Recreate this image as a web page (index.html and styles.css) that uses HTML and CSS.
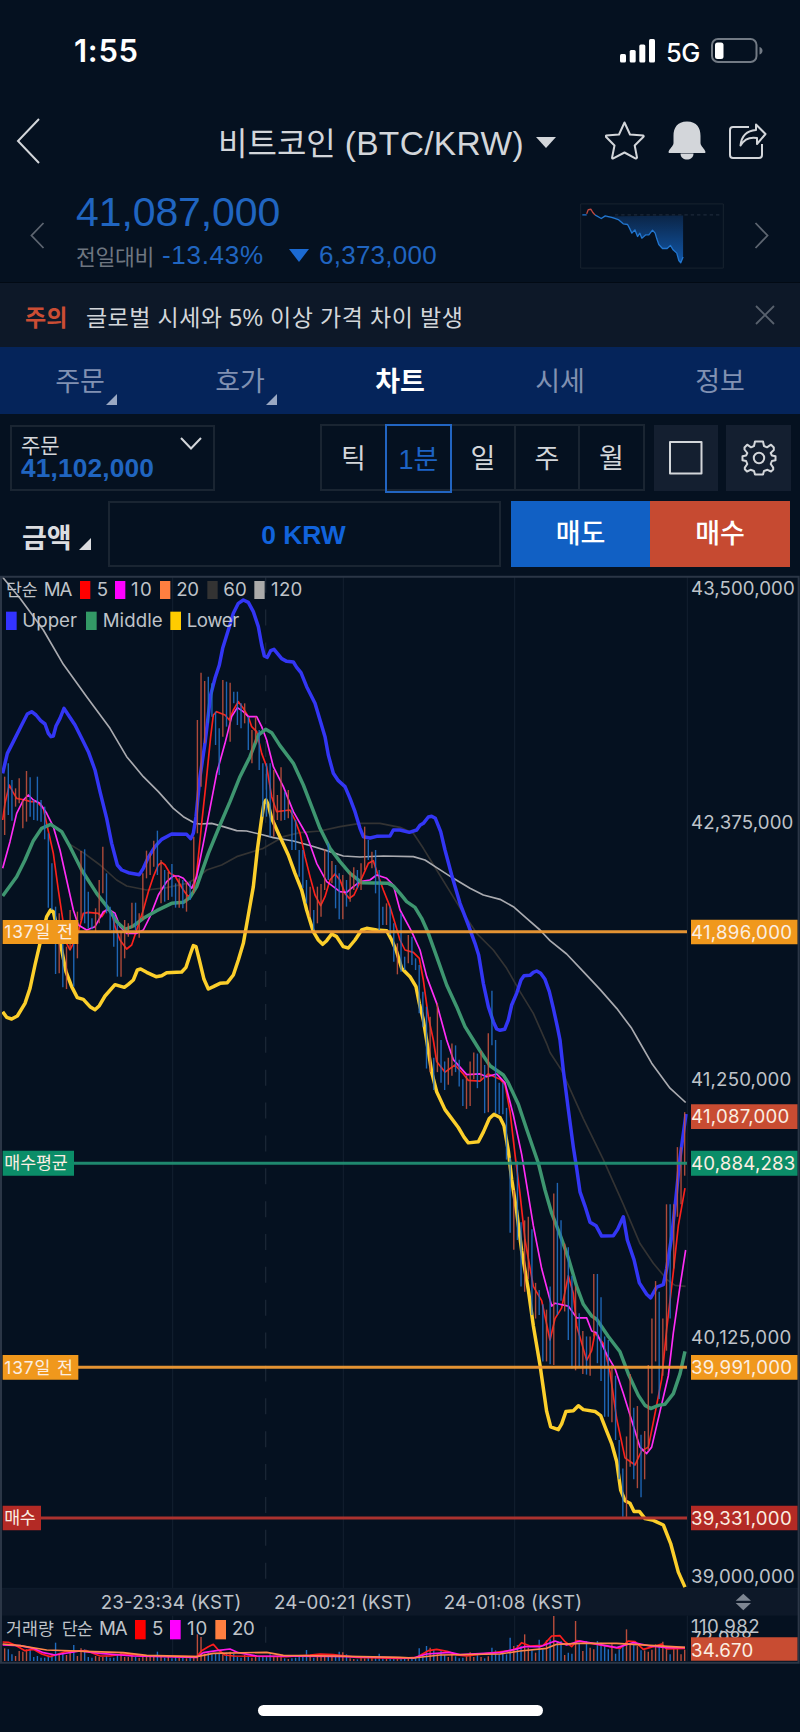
FILE: index.html
```html
<!DOCTYPE html>
<html lang="ko">
<head>
<meta charset="utf-8">
<title>비트코인 (BTC/KRW)</title>
<link rel="stylesheet" href="styles.css">
</head>
<body>
<div class="phone">
  <div class="status">
    <span class="clock">1:55</span>
    <div class="status-right">
      <svg class="signal" viewBox="0 0 35 24"><rect x="0" y="15" width="6" height="8.5" rx="1.5"/><rect x="9.7" y="11" width="6" height="12.5" rx="1.5"/><rect x="19.3" y="5.5" width="6" height="18" rx="1.5"/><rect x="29" y="0" width="6" height="23.5" rx="1.5"/></svg>
      <span class="net">5G</span>
      <svg class="battery" viewBox="0 0 52 25"><rect class="shell" x="1" y="1" width="44.5" height="23" rx="6"/><rect x="4" y="4.500" width="8.500" height="16.500" rx="2.500" fill="#fff"/><path class="nub" d="M48.500 9c4 1 4 6.500 0 7.500z"/></svg>
    </div>
  </div>

  <header class="header">
    <svg class="back" viewBox="0 0 24 46"><path d="M23 1 2 23 23 45"/></svg>
    <h1 class="title">비트코인 <span>(BTC/KRW)</span></h1>
    <svg class="caret" viewBox="0 0 20 11"><path d="M0 0h20L10 11z"/></svg>
    <svg class="icon star" viewBox="0 0 40 39"><path d="M19.500 1.500 25 13.500 38.300 14.500Q39 15 38.500 15.800L29.700 24.500 32 36.500Q31.500 38 30.300 37.400L19.500 31.500 8.300 37.400Q7 38 7.100 36.500L9.500 24.500 .9 15.800Q.5 15 1.200 14.500L14 13.500Z"/></svg>
    <svg class="icon bell" viewBox="0 0 38 39"><path d="M19 .5C9 .5 5.500 7 5.500 15v7c0 3-4.500 6-5 9 0 .8.500 1 1.500 1h34c1 0 1.500-.2 1.500-1-.5-3-5-6-5-9v-7C32.500 7 29 .5 19 .5z"/><path d="M12.500 32.500c0 8 13 8 13 0z"/></svg>
    <svg class="icon share" viewBox="0 0 38 37"><path d="M20 4H4Q1 4 1 7V32Q1 35 4 35H30Q33 35 33 32V21M27 1.500 36.500 11 28 21V15Q17 13 11.500 22.500 13 8 27 7Z"/></svg>
  </header>

  <section class="ticker">
    <svg class="arrow" viewBox="0 0 15 27"><path d="M13.500 1 1.500 13.500 13.500 26"/></svg>
    <div class="quote">
      <div class="price">41,087,000</div>
      <div class="change">
        <span class="label">전일대비</span>
        <span class="pct">-13.43%</span>
        <svg class="down" viewBox="0 0 20 13"><path d="M0 0h20L10 13z"/></svg>
        <span class="amount">6,373,000</span>
      </div>
    </div>
    <svg class="spark" viewBox="60 548 433 197">
      <defs><linearGradient id="fade" x1="0" y1="0" x2="0" y2="1"><stop offset="0" stop-color="#0b2547"/><stop offset="1" stop-color="#1157a8"/></linearGradient></defs>
      <rect class="frame" x="62" y="550" width="429" height="193"/>
      <path class="base" d="M165 583H480"/>
      <path fill="url(#fade)" d="M125 588L175 597 190 610 203 612 216 638 225 628 233 648 240 638 246 653 258 643 267 643 278 629 286 638 297 672 308 684 322 684 332 675 340 688 351 698 357 720 363 727 370 710V585Z"/>
      <path class="fall" d="M67 583H80M105 583L124 594 136 586 158 591 175 597 190 610 203 612 210 625 216 638 225 628 233 648 240 638 246 653 258 643 267 643 278 629 286 638 291 655 297 672 308 684 322 684 332 675 340 688 351 698 357 720 363 727 370 710"/>
      <path class="rise" d="M80 580 85 567 93 566 98 575 105 583"/>
    </svg>
    <svg class="arrow next" viewBox="0 0 15 27"><path d="M1.500 1 13.500 13.500 1.500 26"/></svg>
  </section>

  <section class="notice">
    <strong>주의</strong>
    <span class="message">글로벌 시세와 5% 이상 가격 차이 발생</span>
    <svg class="close" viewBox="0 0 20 20"><path d="M1 1 19 19M19 1 1 19"/></svg>
  </section>

  <nav class="tabs">
    <a class="tab more">주문</a>
    <a class="tab more">호가</a>
    <a class="tab active">차트</a>
    <a class="tab">시세</a>
    <a class="tab">정보</a>
  </nav>

  <section class="toolbar">
    <div class="order">
      <div class="order-text"><span>주문</span><b>41,102,000</b></div>
      <svg class="chev" viewBox="0 0 22 13"><path d="M1 1 11 11.500 21 1"/></svg>
    </div>
    <div class="periods">
      <span>틱</span><span class="on">1분</span><span>일</span><span>주</span><span>월</span>
    </div>
    <button class="tool"><svg viewBox="0 0 36 36"><rect x="2" y="2" width="31.500" height="31.500"/></svg></button>
    <button class="tool"><svg viewBox="0 0 36 36"><path d="M14 1.500h8l1 4.500 3 1.300 4-2.600 2.800 2.800v2.500L29.700 13l1.200 2.500 3.600.7v4l-3.600.8-1.200 3 2.500 3.600v1.900L30 31.500l-3.500-1.700L23 31l-1 3.500h-8L13 31l-3.500-1.200L6 31.500l-2.200-2.300v-1.600l2.500-3.600-1.200-3-3.600-.8v-4l3.600-.7L6.300 13 3.500 9.500V7.500L6.200 4.700l3.800 2.600L13 6z"/><circle cx="18" cy="18" r="5.200"/></svg></button>
  </section>

  <section class="trade">
    <div class="kind">금액</div>
    <div class="value">0 KRW</div>
    <button class="sell">매도</button>
    <button class="buy">매수</button>
  </section>

  <svg class="chart" viewBox="0 15 2400 3267">
    <rect class="band" x="6" y="3055" width="2388" height="82"/>
    <path class="grid" d="M518 20V3055M1030 20V3055M1544 20V3055M2062 20V3055M518 3137V3273M1030 3137V3273M1544 3137V3273M2062 3137V3273"/>
    <path class="grid day" d="M797 20V3055M797 3170V3220"/>
    <path class="sep" d="M6 3055H2394"/>

    <g id="averages" class="ma"></g>
    <g id="bands" class="bands"></g>
    <g id="candles" class="candles"></g>
    <g id="volumes" class="candles volumes"></g>

    <g class="vol-ma" transform="translate(0 3030)">
      <polyline stroke="#ff1d1d" points="8,186 25,187 45,195 75,212 100,208 125,222 150,230 175,222 195,215 260,212 300,228 330,228 370,222 440,228 590,230 605,212 625,200 640,193 655,210 675,225 700,228 860,230 930,225 960,222 1000,224 1070,232 1200,235 1250,232 1285,212 1310,208 1345,215 1370,225 1400,228 1480,218 1530,212 1550,205 1565,188 1590,198 1630,196 1655,168 1680,167 1695,185 1715,200 1730,182 1760,188 1800,195 1860,205 1885,183 1905,185 1930,208 1960,200 1985,192 2000,207 2055,205"/>
      <polyline stroke="#ff18e8" points="8,195 60,197 100,205 130,218 165,225 240,213 300,220 400,228 590,232 610,218 650,212 690,207 715,218 770,228 1000,229 1240,234 1280,222 1350,217 1380,224 1500,218 1545,208 1575,200 1620,200 1665,183 1700,195 1740,183 1780,190 1850,203 1900,188 1950,198 2000,203 2055,203"/>
      <polyline stroke="#ff8748" points="8,192 60,197 140,210 260,214 370,218 440,226 590,230 640,220 800,217 850,226 1000,228 1200,232 1240,234 1320,225 1500,222 1560,213 1640,205 1670,193 1740,190 1850,190 1950,196 2055,202"/>
    </g>

    <g class="levels">
      <path stroke="#f09a35" d="M200 1085H2061M200 2392H2061"/>
      <path stroke="#218f73" d="M200 1780H2061"/>
      <path stroke="#b43430" d="M100 2844H2061"/>
    </g>

    <path fill="#f0981c" d="M8 1050H235V1122H8zM2073 1049H2393V1123H2073zM8 2355H235V2429H8zM2073 2355H2393V2429H2073z"/>
    <path fill="#0b8d68" d="M8 1742H222V1817H8zM2073 1742H2393V1817H2073z"/>
    <path fill="#b32a25" d="M8 2807H123V2881H8zM2073 2807H2393V2881H2073z"/>
    <path fill="#c84c32" d="M2073 1603H2393V1677H2073z"/>

    <g class="label tagged">
      <text class="ko" x="13" y="1105" textLength="206">137일 전</text>
      <text class="ko" x="13" y="1798" textLength="190">매수평균</text>
      <text class="ko" x="13" y="2411" textLength="206">137일 전</text>
      <text class="ko" x="13" y="2863" textLength="94">매수</text>
      <text x="2073" y="1106" textLength="303">41,896,000</text>
      <text x="2073" y="1660" textLength="295">41,087,000</text>
      <text x="2073" y="1799" textLength="313">40,884,283</text>
      <text x="2073" y="2412" textLength="303">39,991,000</text>
      <text x="2073" y="2864" textLength="302">39,331,000</text>
    </g>

    <g class="label">
      <text x="2073" y="74" textLength="311">43,500,000</text>
      <text x="2073" y="778" textLength="307">42,375,000</text>
      <text x="2073" y="1549" textLength="301">41,250,000</text>
      <text x="2073" y="2321" textLength="301">40,125,000</text>
      <text x="2073" y="3040" textLength="311">39,000,000</text>
      <text x="302" y="3117" textLength="422">23-23:34 (KST)</text>
      <text x="822" y="3117" textLength="414">24-00:21 (KST)</text>
      <text x="1331" y="3117" textLength="415">24-01:08 (KST)</text>
      <text x="2073" y="3225" textLength="184">72.988</text>
      <text x="2073" y="3190" textLength="206">110.982</text>
    </g>
    <path fill="#c84c32" d="M2073 3202H2393V3272H2073z"/>
    <text class="label tagged" x="2073" y="3262" textLength="187">34.670</text>
    <path fill="#7e8692" d="M2207 3092 2230 3071 2253 3092zM2207 3099H2253L2230 3121z"/>

    <g class="label">
      <text class="ko" x="18" y="79" textLength="95">단순</text><text x="131" y="79" textLength="86">MA</text><rect x="240" y="33" width="31" height="54" fill="#f00"/>
      <text x="290" y="79">5</text><rect x="345" y="33" width="31" height="54" fill="#f0f"/>
      <text x="393" y="79" textLength="62">10</text><rect x="480" y="33" width="31" height="54" fill="#ff7f40"/>
      <text x="529" y="79" textLength="68">20</text><rect x="622" y="33" width="31" height="54" fill="#333"/>
      <text x="670" y="79" textLength="70">60</text><rect x="763" y="33" width="31" height="54" fill="#aaa"/>
      <text x="813" y="79" textLength="94">120</text>
      <rect x="18" y="125" width="32" height="55" fill="#33f"/><text x="67" y="171" textLength="164">Upper</text>
      <rect x="258" y="125" width="32" height="55" fill="#396"/><text x="308" y="171" textLength="180">Middle</text>
      <rect x="511" y="125" width="32" height="55" fill="#fc0"/><text x="560" y="171" textLength="158">Lower</text>
      <text class="ko" x="18" y="3196" textLength="144">거래량</text><text class="ko" x="185" y="3196" textLength="94">단순</text><text x="297" y="3196" textLength="86">MA</text><rect x="405" y="3150" width="32" height="58" fill="#f00"/>
      <text x="456" y="3196">5</text><rect x="510" y="3150" width="32" height="58" fill="#f0f"/>
      <text x="561" y="3196" textLength="61">10</text><rect x="646" y="3150" width="32" height="58" fill="#ff7f40"/>
      <text x="696" y="3196" textLength="68">20</text>
    </g>
    <path class="frame" d="M3 3278V20H2396V3278Z"/>
  </svg>
  <div class="home"></div>
</div>
<script src="chart.js"></script>
</body>
</html>
```
FILE: styles.css
```css
* { box-sizing: border-box; }
body {
  margin: 0;
  background: #051120;
  color: #d3d6da;
  font-family: "Liberation Sans", "Noto Sans CJK KR", sans-serif;
}
svg { display: block; flex: none; }
button { border: 0; padding: 0; font: inherit; color: inherit; }
.phone { width: 800px; height: 1732px; overflow: hidden; }

.status { display: flex; justify-content: space-between; height: 100px; padding: 33px 37px 0 74px; color: #fff; font-family: Inter, sans-serif; }
.clock { font-size: 31px; line-height: 35px; font-weight: 600; letter-spacing: .7px; }
.status-right { display: flex; align-items: flex-start; height: 37px; padding-top: 5px; }
.signal { width: 35px; height: 24px; margin-top: 1px; fill: #fff; }
.net { margin-left: 11px; width: 45px; font-size: 25.500px; line-height: 29px; font-weight: 500; letter-spacing: -.4px; }
.battery { width: 52px; height: 25px; }
.battery .shell { fill: none; stroke: #727a84; stroke-width: 2; }
.nub { fill: #727a84; }

.header { display: flex; height: 82px; padding-left: 16px; }
.back { width: 24px; height: 46px; margin-top: 18px; fill: none; stroke: #d3d6da; stroke-width: 2; }
.title { margin: 20px 0 0 178px; width: 318px; font-size: 32px; line-height: 48px; font-weight: 400; white-space: nowrap; letter-spacing: 0; }
.title span { font-size: 33.500px; letter-spacing: .35px; }
.caret { width: 20px; height: 11px; margin-top: 37px; fill: #d3d6da; }
.icon { margin-top: 21px; fill: none; stroke: #d3d6da; stroke-width: 2; stroke-linejoin: round; }
.star { width: 40px; height: 39px; margin-left: 49px; }
.bell { width: 38px; height: 39px; margin-left: 23px; fill: #d3d6da; stroke: none; }
.share { width: 38px; height: 37px; margin: 23px 0 0 23px; }

.ticker { display: flex; height: 101px; padding: 8px 0 0 30px; color: #2065c0; border-bottom: 1px solid #020a14; }
.arrow { width: 15px; height: 27px; margin-top: 32px; fill: none; stroke: #5d6570; stroke-width: 1.8; }
.quote { width: 504px; margin-left: 31px; }
.price { font-size: 41px; line-height: 44px; letter-spacing: -.1px; }
.change { display: flex; align-items: center; height: 40px; margin-top: 1px; font-size: 26px; }
.label { font-family: Inter, "Noto Sans CJK KR", sans-serif; }
.change .label { width: 86px; color: #6e7680; font-size: 21.500px; letter-spacing: -.3px; }
.pct { width: 127px; letter-spacing: .7px; }
.down { width: 20px; height: 13px; margin-right: 10px; fill: #1b6ad2; }
.amount { letter-spacing: .25px; }
.spark { width: 144px; height: 66px; margin-top: 13px; fill: none; stroke-width: 4; stroke-linejoin: round; }
.spark .frame { stroke: #18232f; stroke-width: 3; }
.base { stroke: #1c2939; stroke-dasharray: 10 9; }
.fall { stroke: #2276cf; }
.rise { stroke: #c04a40; }
.next { margin-left: 30px; }

.notice { display: flex; align-items: center; height: 64px; padding: 1px 25px 0; background: #0d1828; font-size: 23px; }
.notice strong { width: 61px; color: #cb4d34; font-weight: 700; }
.message { flex: 1; font-size: 23px; letter-spacing: .43px; white-space: nowrap; }
.close { width: 20px; height: 20px; margin-top: -1px; stroke: #58616d; stroke-width: 1.8; }

.tabs { display: grid; grid-template-columns: repeat(5, 1fr); height: 67px; background: #05245a; }
.tab { position: relative; padding-top: 3px; text-align: center; font-size: 27px; line-height: 64px; color: #8191b2; }
.tab.active { color: #fff; font-weight: 700; }
.more::after { content: ""; position: absolute; left: 106px; top: 47px; border-left: 11px solid transparent; border-bottom: 11px solid #9aa8c2; }

.toolbar { display: flex; align-items: flex-start; height: 87px; padding: 10px 9px 0 10px; }
.order { display: flex; width: 205px; height: 66px; margin-top: 1px; padding: 8px 11px 0 9px; border: 2px solid #1a2532; }
.order-text { display: flex; flex: 1; flex-direction: column; }
.order-text span { font-size: 21px; line-height: 21px; }
.order-text b { font-size: 26.300px; line-height: 27px; letter-spacing: .15px; margin-top: -1px; color: #2065c0; }
.chev { width: 22px; height: 13px; margin-top: 2px; fill: none; stroke: #d3d6da; stroke-width: 2; }
.periods { display: grid; grid-template-columns: 65px 65px 64px 64px 1fr; width: 325px; height: 67px; margin-left: 105px; border: 2px solid #1a2532; font-size: 27px; }
.periods span { padding-top: 3px; line-height: 61px; text-align: center; border-right: 2px solid #1a2532; }
.periods span:last-child { border-right: 0; }
.periods .on { margin: -2px 0 -2px -2px; padding-top: 4px; border: 2px solid #2265c2; color: #1d63c4; }
.tool { display: grid; place-items: center; width: 64px; height: 66px; margin: 1px 0 0 9px; background: #141f30; }
.tool + .tool { margin-left: 8px; width: 65px; }
.tool svg { width: 36px; height: 36px; fill: none; stroke: #d3d6da; stroke-width: 2; stroke-linejoin: round; }

.trade { display: flex; height: 74px; padding-left: 22px; font-size: 27px; line-height: 62px; text-align: center; }
.kind { position: relative; width: 86px; padding-top: 7px; text-align: left; font-weight: 700; color: #dcdde0; }
.kind::after { content: ""; position: absolute; left: 57px; top: 37px; border-left: 12px solid transparent; border-bottom: 12px solid #dcdde0; }
.value { width: 393px; height: 66px; margin-right: 10px; padding-right: 2px; border: 2px solid #1a2532; font-size: 26.400px; line-height: 64px; font-weight: 700; color: #1163dc; }
.sell, .buy { width: 139px; height: 66px; background: #1160c4; color: #fff; font-weight: 500; line-height: 60px; }
.buy { width: 140px; background: #c64a31; }

.chart { width: 800px; height: 1089px; }
.chart .band { fill: #0d1828; }
.chart .sep { stroke: #101d2d; stroke-width: 3; }
.chart .frame { fill: none; stroke: #2b3646; stroke-width: 6; }
.grid { stroke: #142030; stroke-width: 3; }
.day { stroke: #1a2635; stroke-width: 4; stroke-dasharray: 48 50.6; }
.ma, .bands, .vol-ma { fill: none; stroke-linejoin: round; }
.ma { stroke-width: 5; }
.bands { stroke-width: 10.500; }
.vol-ma { stroke-width: 5; }
.candles { stroke-width: 4.200; opacity: .88; }
.candles .up { stroke: #c5523e; }
.candles .down-bar { stroke: #2271c8; }
.volumes { opacity: .95; }
.levels { stroke-width: 9; opacity: .95; }
.chart .label { fill: #bfc3c9; font-size: 56px; }
.chart .tagged { fill: #fbeee2; }
.chart .ko { font-size: 52px; }

.home { width: 285px; height: 11px; margin: 41px 0 0 258px; border-radius: 6px; background: #fff; }
```
FILE: chart.js
```js
// One entry per minute: direction (r = up, b = down), high and low.
const candles = `r620-795 b580-735 b630-752 r655-710 r625-700 r690-775 r603-755 b622-740 b690-750 b620-752
b690-755 b710-808 b790-1013 b880-1020 b1010-1212 r1030-1210 b1120-1252 r1130-1257 r1020-1140 b1060-1250
r1025-1165 r843-1050 b838-1060 b965-1075 b1045-1078 r1015-1085 r930-1060 r830-970 b910-1030 b1010-1080
b1030-1130 b1060-1220 r1085-1220 r1050-1165 r1060-1100 r998-1075 b998-1080 r1030-1103 r910-1050 r842-925
r850-915 r812-890 b782-915 r870-1000 b900-995 r905-990 b882-980 b940-1013 r925-1013 b930-1015
r935-1025 b935-990 r800-970 r450-790 r308-650 r333-520 b320-460 b340-440 b425-525 b475-615
r330-500 b335-470 r338-515 b365-400 b365-465 b400-475 r400-460 b440-540 r480-580 r440-520
b480-600 b580-740 b580-740 b580-800 r600-800 r675-750 r592-752 b665-750 r660-745 b720-840
b750-840 b840-920 b840-955 b930-1000 r950-1040 b1020-1080 r950-1060 r942-1040 r838-960 b820-930
r873-940 b885-1015 b910-1048 r915-1048 b930-1010 r905-995 r892-960 b900-955 r880-960 r770-900
b810-870 r845-895 b840-970 b900-1080 b1010-1065 r1000-1065 b1010-1095 b1060-1175 r1120-1213 b1030-1205
b1160-1200 r1095-1180 b1100-1185 b1165-1200 b1185-1330 b1265-1370 b1310-1490 r1340-1500 b1460-1550 r1300-1500
b1410-1530 b1470-1550 r1460-1535 r1420-1510 b1425-1500 b1465-1540 b1520-1595 r1510-1603 r1470-1595 r1445-1520
b1448-1545 r1440-1525 b1480-1615 r1390-1612 b1262-1425 b1410-1615 b1530-1618 b1530-1618 b1600-1745 b1740-1950
r1830-1997 b1750-1970 b1920-2100 r1915-2115 r1905-2080 b1940-2180 r2090-2190 b2110-2180 b2150-2310 r2165-2310
b2100-2318 r1840-2320 b1810-2180 b1915-2140 r1980-2170 b1990-2250 b2070-2330 r2100-2335 b2175-2325 r2225-2345
b2240-2347 r2240-2350 r2065-2240 b2065-2315 b2130-2365 b2240-2465 b2250-2465 r2320-2480 b2350-2530 b2530-2640
b2610-2745 r2520-2745 r2345-2605 b2440-2640 r2435-2665 b2515-2690 r2505-2640 r2320-2560 r2190-2400 r2085-2310
b2115-2415 r2190-2350 r1870-2280 b1870-2190 r1870-2050 r1710-1905 r1710-1870 r1612-1790`.split(/\s+/);

const volumes = [
  38, 35, 20, 15, 30, 28, 35, 35, 12, 15, 10, 10, 15, 22, 55, 20, 25, 18, 28, 48,
  15, 38, 35, 12, 10, 15, 12, 12, 15, 10, 10, 20, 25, 12, 12, 15, 12, 10, 12, 14,
  12, 15, 28, 12, 10, 12, 8, 12, 10, 10, 8, 10, 12, 80, 72, 22, 25, 20, 22, 25,
  20, 25, 28, 22, 12, 10, 18, 12, 10, 18, 15, 14, 12, 20, 15, 14, 12, 8, 6, 8,
  10, 15, 16, 33, 12, 10, 12, 16, 12, 12, 14, 12, 28, 26, 20, 8, 6, 5, 10, 8,
  10, 12, 12, 22, 12, 12, 10, 10, 12, 8, 8, 8, 8, 12, 38, 16, 45, 40, 36, 20,
  32, 18, 12, 18, 14, 8, 10, 14, 26, 12, 18, 12, 8, 14, 40, 32, 20, 25, 20, 70,
  45, 48, 45, 80, 40, 32, 25, 64, 35, 62, 65, 135, 60, 60, 18, 25, 22, 120, 55, 30,
  60, 40, 35, 60, 55, 45, 35, 50, 22, 35, 45, 95, 50, 52, 45, 32, 32, 28, 34, 50,
  42, 58, 38, 20, 40, 38, 20, 34, 36, 32
];

const averages = [
  ["#333", "205,820 250,848 300,885 350,930 380,948 440,960 500,953 560,940 590,925 620,900 665,885 710,860 790,835 850,800 900,788 960,783 1020,770 1080,760 1140,760 1200,772 1240,790 1270,835 1310,900 1350,965 1390,1030 1430,1090 1480,1140 1520,1195 1560,1265 1600,1330 1640,1420 1650,1445 1685,1495 1750,1630 1810,1745 1870,1870 1920,1980 1960,2035 2000,2080 2025,2097 2057,2100"],
  ["#aaabb0", "8,22 60,85 130,180 190,283 260,380 330,475 380,560 430,620 475,665 520,715 550,740 585,760 600,762 635,760 670,770 710,782 740,783 790,795 820,803 880,813 935,828 990,845 1030,858 1080,861 1150,858 1240,860 1275,870 1310,893 1360,925 1410,955 1450,975 1500,988 1540,1010 1580,1045 1620,1080 1650,1112 1700,1152 1750,1205 1800,1258 1850,1315 1895,1375 1915,1410 1955,1475 2010,1545 2057,1585"],
  ["#fc211c", "8,750 15,700 28,645 38,665 50,685 75,690 92,695 110,695 130,715 142,770 160,850 175,960 190,1060 200,1120 210,1140 220,1120 235,1085 250,1030 265,1027 295,1030 305,1040 320,1018 335,1025 345,1070 360,1110 380,1137 395,1125 410,1080 430,1020 445,965 460,920 475,885 485,877 495,885 510,910 525,918 550,960 565,980 580,965 590,910 605,760 618,640 632,500 640,435 650,425 675,435 688,450 700,420 715,395 730,415 745,440 755,470 770,485 785,550 800,590 815,680 830,725 870,720 885,750 900,790 915,860 930,920 945,975 962,1007 975,980 990,930 1005,912 1020,930 1035,970 1048,985 1062,975 1085,925 1105,880 1120,872 1132,910 1150,960 1170,1010 1185,1060 1200,1110 1215,1140 1240,1147 1258,1165 1270,1230 1285,1340 1300,1410 1310,1470 1335,1500 1365,1480 1390,1505 1405,1523 1440,1525 1465,1505 1500,1520 1515,1535 1530,1610 1545,1730 1560,1840 1575,1970 1600,2100 1625,2140 1650,2250 1665,2190 1685,2160 1705,2070 1720,2120 1730,2210 1760,2307 1775,2280 1785,2230 1810,2260 1830,2340 1850,2470 1875,2580 1905,2600 1925,2560 1945,2550 1960,2480 1985,2360 2000,2220 2020,2060 2035,1930 2055,1825"],
  ["#ff2df5", "8,895 30,815 50,730 70,690 85,675 100,690 120,700 140,730 160,770 180,840 200,930 220,1020 235,1065 260,1080 285,1070 310,1025 325,1018 345,1030 360,1070 380,1090 410,1090 430,1080 450,1040 475,975 500,935 520,918 535,918 550,925 575,955 590,920 610,820 630,715 650,610 675,520 695,440 712,413 730,425 745,440 770,440 785,470 800,510 820,590 850,650 880,725 920,795 950,880 980,935 1000,950 1020,965 1040,967 1060,950 1080,935 1110,930 1130,915 1160,925 1180,945 1200,1020 1235,1085 1260,1140 1280,1220 1310,1300 1340,1410 1360,1465 1400,1507 1440,1505 1460,1513 1490,1505 1515,1530 1540,1620 1565,1730 1600,1930 1625,2050 1655,2155 1665,2147 1705,2155 1730,2188 1760,2188 1775,2225 1790,2230 1820,2290 1845,2330 1870,2400 1900,2490 1920,2550 1940,2568 1955,2550 1980,2450 2005,2350 2020,2230 2040,2100 2057,1998"]
];

const bands = [
  ["#3336f5", "8,610 22,550 40,515 65,465 82,432 95,425 108,435 122,452 135,462 145,490 153,500 160,498 168,468 180,445 192,415 205,435 225,465 245,505 265,545 285,600 300,665 320,745 335,820 352,885 365,900 385,908 418,914 430,895 445,862 465,830 485,808 515,792 560,793 572,806 580,790 588,740 600,620 615,520 632,375 645,325 658,285 668,235 688,170 700,130 715,100 730,90 745,97 760,125 775,170 785,225 793,258 802,262 812,242 822,238 832,250 845,266 860,274 880,276 890,292 903,308 920,350 945,400 960,450 975,500 985,555 1000,610 1015,632 1035,650 1050,685 1065,725 1080,775 1090,800 1110,804 1130,799 1170,798 1180,780 1200,780 1228,787 1250,780 1260,766 1270,760 1285,741 1295,739 1306,745 1322,785 1335,840 1355,915 1380,1000 1405,1065 1425,1120 1436,1155 1450,1240 1465,1310 1480,1355 1490,1377 1500,1381 1514,1378 1525,1350 1535,1305 1550,1270 1563,1230 1572,1217 1590,1216 1600,1207 1610,1203 1622,1210 1635,1228 1648,1265 1660,1315 1672,1370 1680,1410 1690,1495 1705,1605 1720,1710 1730,1770 1740,1835 1755,1875 1770,1920 1788,1930 1805,1959 1840,1958 1853,1940 1870,1905 1882,1970 1902,2025 1918,2090 1940,2122 1952,2132 1970,2102 1990,2095 2000,2050 2015,1960 2028,1850 2040,1740 2058,1617"],
  ["#3e9670", "8,978 50,920 75,870 100,812 125,775 152,763 185,785 210,830 245,900 290,970 325,1015 350,1055 375,1078 400,1068 430,1045 470,1022 515,1000 550,997 570,982 590,950 625,850 660,765 690,695 720,620 750,560 775,495 797,478 815,488 840,527 880,580 910,645 935,710 960,775 990,835 1020,875 1050,910 1085,938 1165,940 1180,948 1200,970 1220,995 1245,1012 1265,1045 1285,1090 1310,1160 1340,1245 1370,1310 1395,1370 1420,1410 1440,1440 1470,1482 1510,1508 1525,1530 1555,1590 1580,1660 1615,1755 1635,1830 1655,1895 1680,1955 1705,2020 1730,2100 1750,2150 1775,2183 1790,2192 1825,2240 1860,2283 1885,2345 1915,2405 1935,2433 1952,2442 1975,2433 1995,2430 2020,2400 2040,2345 2055,2282"],
  ["#fccf2b", "8,1325 20,1342 35,1347 52,1338 75,1300 90,1255 105,1185 120,1120 140,1040 152,1020 160,1025 168,1060 185,1140 198,1205 215,1250 232,1283 250,1288 270,1310 285,1319 298,1307 315,1278 345,1244 373,1252 385,1243 400,1230 412,1200 422,1197 440,1207 468,1220 485,1217 500,1208 545,1206 558,1192 570,1155 580,1127 588,1130 598,1170 612,1228 625,1257 640,1250 660,1240 682,1238 700,1215 715,1170 730,1120 745,1035 760,950 772,840 785,745 792,700 798,690 805,705 815,745 835,790 865,855 885,910 905,960 920,1020 940,1085 955,1110 968,1123 980,1112 995,1092 1010,1100 1030,1130 1045,1134 1065,1110 1085,1080 1100,1075 1130,1080 1160,1082 1175,1110 1190,1145 1205,1195 1230,1220 1248,1250 1258,1300 1270,1350 1285,1440 1295,1500 1310,1555 1335,1605 1375,1655 1392,1682 1405,1698 1435,1695 1450,1668 1468,1630 1482,1618 1500,1627 1512,1650 1525,1720 1535,1800 1550,1890 1565,2000 1585,2110 1600,2210 1620,2320 1640,2450 1652,2493 1675,2501 1685,2485 1698,2450 1720,2448 1735,2434 1750,2445 1785,2450 1802,2462 1818,2500 1835,2540 1850,2590 1862,2670 1875,2700 1890,2707 1902,2730 1918,2730 1935,2750 1960,2755 1990,2768 2012,2820 2035,2900 2055,2942"]
];

const NS = "http://www.w3.org/2000/svg";
const BASELINE = 3273;
const KNEE = 1410;
const step = 2040 / (candles.length - 1);

function toY(v) {
  return v <= KNEE ? v : KNEE + (v - KNEE) * 15 / 14;
}

function add(parent, tag, attrs) {
  const node = document.createElementNS(NS, tag);
  for (const name in attrs) node.setAttribute(name, attrs[name]);
  document.getElementById(parent).appendChild(node);
}

function drawSeries(parent, series) {
  for (const [stroke, data] of series) {
    const points = data.split(" ").map(pair => {
      const [x, v] = pair.split(",").map(Number);
      return x + "," + toY(v).toFixed(1);
    }).join(" ");
    add(parent, "polyline", { stroke, points });
  }
}

drawSeries("averages", averages);
drawSeries("bands", bands);

candles.forEach((entry, i) => {
  const kind = entry[0] === "r" ? "up" : "down-bar";
  const [high, low] = entry.slice(1).split("-").map(Number);
  const x = (14 + i * step).toFixed(1);
  add("candles", "path", { class: kind, d: `M${x} ${toY(high).toFixed(1)}V${toY(low).toFixed(1)}` });
  add("volumes", "path", { class: kind, d: `M${x} ${BASELINE}v-${volumes[i]}` });
});
```
